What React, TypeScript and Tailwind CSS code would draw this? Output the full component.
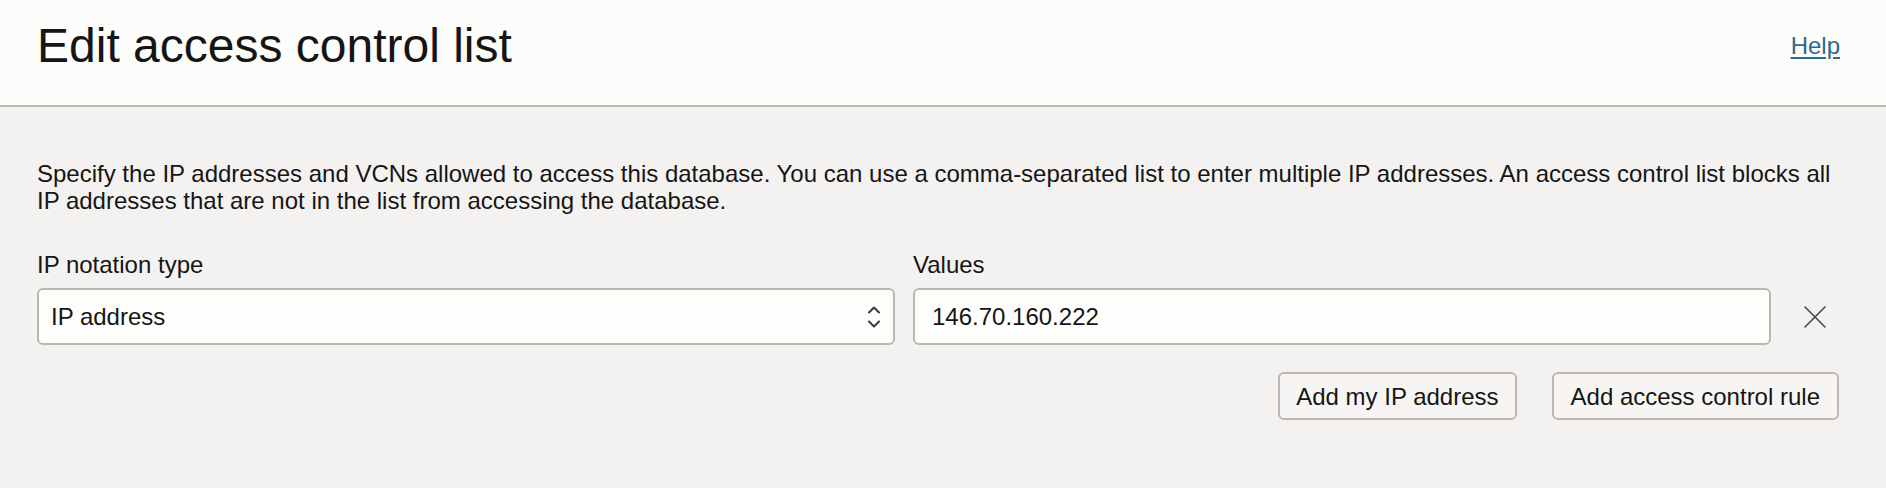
import { useState } from "react";

function UpDownIcon() {
  return (
    <svg width="14" height="24" viewBox="0 0 14 24" fill="none" stroke="#3a3836" strokeWidth="2" strokeLinecap="round" strokeLinejoin="round">
      <polyline points="2,7.5 7,2.5 12,7.5" />
      <polyline points="2,16.5 7,21.5 12,16.5" />
    </svg>
  );
}

function CloseIcon() {
  return (
    <svg width="22" height="22" viewBox="0 0 22 22" fill="none" stroke="#4a4846" strokeWidth="1.6" strokeLinecap="round">
      <line x1="1" y1="1" x2="21" y2="21" />
      <line x1="21" y1="1" x2="1" y2="21" />
    </svg>
  );
}

export default function App() {
  const [value, setValue] = useState("146.70.160.222");

  return (
    <div className="min-h-screen bg-[#f3f2f1] text-[#161513] font-['Liberation_Sans',Arial,Helvetica,sans-serif]">
      <header className="h-[107px] bg-[#fcfcfb] border-b-2 border-[#bdb7b0] pl-[37px] pr-[46px] pt-[18px] flex items-start justify-between">
        <h1 className="text-[48px] leading-[56px] font-normal">Edit access control list</h1>
        <a href="#" className="mt-[14px] text-[24px] leading-[27px] text-[#2c6a8e] underline underline-offset-[3px]">
          Help
        </a>
      </header>

      <main className="pl-[37px] pr-[47px] pt-[53px] text-[24px] leading-[27px]">
        <p>
          Specify the IP addresses and VCNs allowed to access this database. You can use a comma-separated list to enter multiple IP addresses. An access control list blocks all IP addresses that are not in the list from accessing the database.
        </p>

        <div className="mt-[37px] flex items-end">
          <div className="flex-1 flex flex-col gap-[10px]">
            <label>IP notation type</label>
            <div className="h-[57px] bg-[#fdfdfc] border-2 border-[#bdb7b0] rounded-[6px] pl-[12px] pr-[12px] flex items-center justify-between">
              <span>IP address</span>
              <UpDownIcon />
            </div>
          </div>
          <div className="flex-1 ml-[18px] flex flex-col gap-[10px]">
            <label>Values</label>
            <input
              value={value}
              onChange={(e) => setValue(e.target.value)}
              className="h-[57px] bg-[#fdfdfc] border-2 border-[#bdb7b0] rounded-[6px] pl-[17px] pr-[12px] outline-none"
            />
          </div>
          <button className="ml-[33px] mr-[13px] h-[57px] w-[22px] flex items-center justify-center">
            <CloseIcon />
          </button>
        </div>

        <div className="mt-[27px] flex justify-end gap-[35px]">
          <button className="h-[48px] px-[16px] bg-[#f6f5f4] border-2 border-[#bdb7b0] rounded-[6px]">
            Add my IP address
          </button>
          <button className="h-[48px] px-[17px] bg-[#f6f5f4] border-2 border-[#bdb7b0] rounded-[6px]">
            Add access control rule
          </button>
        </div>
      </main>
    </div>
  );
}
